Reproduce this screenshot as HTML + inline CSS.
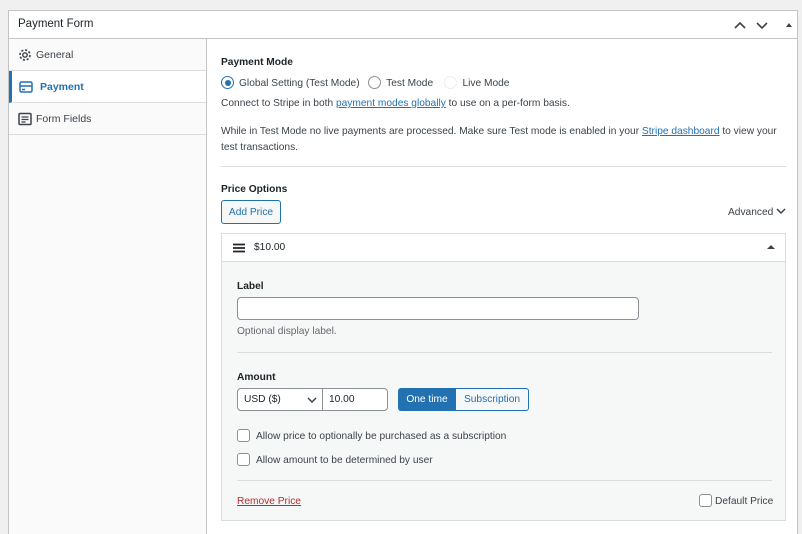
<!DOCTYPE html>
<html><head><meta charset="utf-8"><style>
*{box-sizing:border-box}
html,body{margin:0;width:802px;height:534px;overflow:hidden}
body{background:#f0f0f1;font-family:"Liberation Sans",sans-serif;font-size:10.2px;color:#3c434a;position:relative}
.box{position:absolute;left:8px;top:10px;width:790px;height:530px;background:#fff;border:1px solid #c3c4c7}
.hd{height:28px;border-bottom:1px solid #c3c4c7;position:relative}
.hd .t{position:absolute;left:9px;top:7px;font-size:11.5px;color:#1d2327}
.side{position:absolute;left:0;top:28px;width:198px;height:510px;background:#fafafa;border-right:1px solid #c3c4c7}
.tab{height:32px;border-bottom:1px solid #dcdcde;position:relative;background:#fafafa}
.tab span{position:absolute;left:27px;top:10px;font-size:10.5px}
.tab svg{position:absolute;left:9px;top:9px}
.tab.on{background:#fff;border-left:3px solid #2271b1}
.tab.on span{left:28px;color:#2271b1;font-weight:bold}
.tab.on svg{left:7px}
.a{position:absolute;white-space:nowrap}
a{color:#2271b1;text-decoration:underline}
.b{font-weight:bold;color:#1d2327}
.rad{display:inline-block;width:13px;height:13px;border:1px solid #8c8f94;border-radius:50%;vertical-align:-3px;margin-right:5px;position:relative;background:#fff}
.cb{position:absolute;width:13px;height:13px;border:1px solid #8c8f94;border-radius:3px;background:#fff}
.btn{display:flex;align-items:center;justify-content:center}
</style></head><body>
<div class="box">
<div class="hd"><span class="t">Payment Form</span>
<svg class="a" style="left:724px;top:8px" width="60" height="12"><path d="M2 9l5-5 5 5M24 4l5 5 5-5" stroke="#3c434a" stroke-width="1.6" fill="none"/><path d="M53 8l3-4 3 4z" fill="#3c434a"/></svg></div>
<div class="side">
<div class="tab"><svg width="14" height="14" viewBox="0 0 14 14"><circle cx="7" cy="7" r="2.2" fill="none" stroke="#3c434a" stroke-width="1.4"/><circle cx="7" cy="7" r="5" fill="none" stroke="#3c434a" stroke-width="1.6" stroke-dasharray="2.2 1.7"/></svg><span>General</span></div>
<div class="tab on"><svg width="14" height="14"><rect x="1" y="2" width="12" height="10" rx="1.5" fill="none" stroke="#2271b1" stroke-width="1.5"/><path d="M1 6h12M3 9.5h3" stroke="#2271b1" stroke-width="1.5"/></svg><span>Payment</span></div>
<div class="tab"><svg width="14" height="14"><rect x="1" y="1.5" width="12" height="11" rx="1" fill="none" stroke="#3c434a" stroke-width="1.5"/><path d="M3.5 5h7M3.5 7.5h7M3.5 10h4" stroke="#3c434a" stroke-width="1.3"/></svg><span>Form Fields</span></div>
</div>
</div>
<div class="a b" style="left:221px;top:57px">Payment Mode</div>
<div class="a" style="left:221px;top:76px"><span class="rad" style="border-color:#2271b1"><span style="position:absolute;left:2.5px;top:2.5px;width:6px;height:6px;border-radius:50%;background:#2271b1"></span></span>Global Setting (Test Mode) &nbsp;&nbsp;<span class="rad"></span>Test Mode &nbsp;&nbsp;&nbsp;<span class="rad" style="border-color:#eee"></span>Live Mode</div>
<div class="a" style="left:221px;top:98px">Connect to Stripe in both <a>payment modes globally</a> to use on a per-form basis.</div>
<div class="a" style="left:221px;top:124px;line-height:16px">While in Test Mode no live payments are processed. Make sure Test mode is enabled in your <a>Stripe dashboard</a> to view your<br>test transactions.</div>
<div class="a" style="left:221px;top:166px;width:565px;border-top:1px solid #dcdcde"></div>
<div class="a b" style="left:221px;top:184px">Price Options</div>
<div class="a btn" style="left:221px;top:200px;width:60px;height:24px;border:1px solid #2271b1;border-radius:3px;background:#f6f7f7;color:#2271b1">Add Price</div>
<div class="a" style="left:728px;top:207px">Advanced <svg width="10" height="8"><path d="M1 2l4 4 4-4" stroke="#3c434a" stroke-width="1.5" fill="none"/></svg></div>
<div class="a" style="left:221px;top:233px;width:565px;height:288px;border:1px solid #dcdcde;background:#f6f7f7">
<div style="height:28px;background:#fff;border-bottom:1px solid #dcdcde;position:relative">
<svg class="a" style="left:11px;top:9px" width="12" height="10"><path d="M0 1.5h12M0 5h12M0 8.5h12" stroke="#1d2327" stroke-width="1.7"/></svg>
<span class="a" style="left:32px;top:8px;color:#1d2327">$10.00</span>
<svg class="a" style="left:545px;top:10px" width="8" height="6"><path d="M0 5l4-4 4 4z" fill="#3c434a"/></svg></div>
<div class="a b" style="left:15px;top:47px">Label</div>
<div class="a" style="left:15px;top:63px;width:402px;height:23px;border:1px solid #8c8f94;border-radius:4px;background:#fff"></div>
<div class="a" style="left:15px;top:92px;color:#646970">Optional display label.</div>
<div class="a" style="left:15px;top:118px;width:535px;border-top:1px solid #dcdcde"></div>
<div class="a b" style="left:15px;top:138px">Amount</div>
<div class="a" style="left:15px;top:154px;width:86px;height:23px;border:1px solid #8c8f94;border-radius:4px 0 0 4px;background:#fff;padding:5px 6px;color:#1d2327">USD ($)<svg style="position:absolute;left:69px;top:8px" width="10" height="7"><path d="M1 1l4 4 4-4" stroke="#3c434a" stroke-width="1.5" fill="none"/></svg></div>
<div class="a" style="left:100px;top:154px;width:66px;height:23px;border:1px solid #8c8f94;border-radius:0 4px 4px 0;background:#fff;padding:5px 6px;color:#1d2327">10.00</div>
<div class="a btn" style="left:176px;top:154px;width:58px;height:23px;background:#2271b1;border:1px solid #2271b1;border-radius:3px 0 0 3px;color:#fff">One time</div>
<div class="a btn" style="left:234px;top:154px;width:73px;height:23px;background:#f6f7f7;border:1px solid #2271b1;border-left:0;border-radius:0 3px 3px 0;color:#2271b1">Subscription</div>
<div class="cb" style="left:15px;top:195px"></div><div class="a" style="left:34px;top:197px">Allow price to optionally be purchased as a subscription</div>
<div class="cb" style="left:15px;top:219px"></div><div class="a" style="left:34px;top:221px">Allow amount to be determined by user</div>
<div class="a" style="left:15px;top:246px;width:535px;border-top:1px solid #dcdcde"></div>
<div class="a" style="left:15px;top:262px;color:#b32d2e;text-decoration:underline">Remove Price</div>
<div class="cb" style="left:477px;top:260px"></div><div class="a" style="left:493px;top:262px">Default Price</div>
</div>
</body></html>
